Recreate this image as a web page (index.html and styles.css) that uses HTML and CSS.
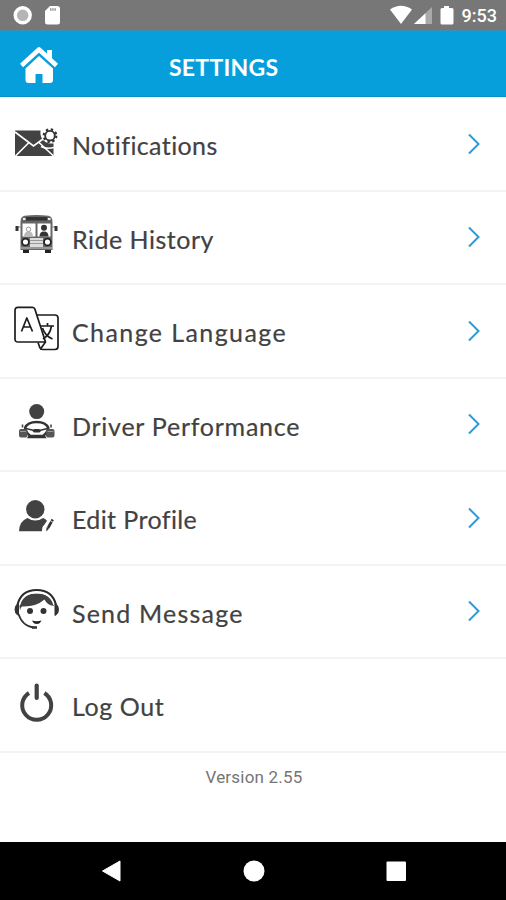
FILE: index.html
```html
<!DOCTYPE html>
<html lang="en">
<head>
    <meta charset="UTF-8">
    <meta name="viewport" content="width=device-width, initial-scale=1.0">
    <title>Settings</title>
    <link rel="stylesheet" href="styles.css">
</head>
<body>
    <div class="status-bar">
        <svg width="50" height="30" viewBox="0 0 50 30">
            <circle cx="10.700" cy="15.300" r="7.500" fill="#b5b5b5" stroke="#fff" stroke-width="3.400"/>
            <path d="M38 6h7q3 0 3 2.500v13.500q0 2.500-2.500 2.500h-10q-2.500 0-2.500-2.500V11z" fill="#fff"/>
            <path d="M38 9.500h6" stroke="#999" stroke-width="2.500" stroke-dasharray="1.500 .7"/>
        </svg>
        <div class="status-right">
            <svg width="66" height="30" viewBox="0 0 66 30">
                <path d="M1 9.500Q12 2 23 9.500L12 24z" fill="#fff"/>
                <path d="M43 7v17H25z" fill="#aaa"/>
                <path d="M36.500 13.200V24H25z" fill="#fff"/>
                <path d="M55 6h5v2h3q1.500 0 1.500 1.500V23q0 1.500-1.500 1.500h-10q-1.500 0-1.500-1.500V9.500Q51.500 8 53 8h2z" fill="#fff"/>
            </svg>
            <span class="clock">9:53</span>
        </div>
    </div>

    <header class="header">
        <svg class="home" width="40" height="38" viewBox="0 0 40 38">
            <path d="M1.500 19.500L19 3.500L36.500 19.500" fill="none" stroke="#fff" stroke-width="4.600" stroke-linejoin="round"/>
            <path d="M27 4h5v11l-5-4z" fill="#fff"/>
            <path d="M19 10L33 22.500V34q0 3-3 3h-7.500v-9h-7v9H8.500q-3 0-3-3V22.500z" fill="#fff"/>
        </svg>
        <h1>SETTINGS</h1>
    </header>

    <ul class="menu">
        <li class="item">
            <svg class="icon" viewBox="0 0 46 46">
                <path d="M1 9.500h25.500q-1 8 5 11.500q3 2 8 1.500V35H1z" fill="#424242"/>
                <path d="M1 11l18.500 14L29 18M1.500 35L15 21.500M39.500 35L25 21.500" fill="none" stroke="#fff" stroke-width="1.600"/>
                <path d="M27 25.500q6 3 13 1" fill="none" stroke="#fff" stroke-width="1.500"/>
                <circle cx="36" cy="14.700" r="6.300" fill="none" stroke="#333" stroke-width="2.200" stroke-dasharray="2.400 2.548"/>
                <circle cx="36" cy="14.700" r="4.800" fill="#fff" stroke="#333" stroke-width="1.900"/>
            </svg>
            <span class="label notifications">Notifications</span>
            <svg class="arrow" viewBox="0 0 14 22"><path d="M2 1.500L11.500 11L2 20.500"/></svg>
        </li>
        <li class="item">
            <svg class="icon" viewBox="0 0 46 46">
                <path d="M9 35h6v4H9zM31 35h6v4h-6z" fill="#222"/>
                <path d="M6.500 36V8q0-5.500 4-6.200q12-1.600 24 0q4 .7 4 6.200v28z" fill="#666"/>
                <path d="M12 4.800h21" stroke="#333" stroke-width="3.500"/>
                <path d="M9 5h2.500M34 5h2.500" stroke="#eee" stroke-width="2"/>
                <path d="M8.500 9.500h13v13h-13zM23.500 9.500h13v13h-13z" fill="#fff"/>
                <path d="M10 22.500q0-5 4.500-5t4.500 5z" fill="#bbb"/>
                <circle cx="14.500" cy="15.300" r="2.200" fill="none" stroke="#999"/>
                <path d="M25.500 22.500q0-5 4.500-5t4.500 5z" fill="#333"/>
                <circle cx="30" cy="13.800" r="3" fill="#333"/>
                <path d="M16 24h13v9H16z" fill="#ddd"/>
                <path d="M16 26.500h13M16 29.500h13" stroke="#999"/>
                <path d="M6.500 34h32" stroke="#aaa" stroke-width="1.500"/>
                <circle cx="11.500" cy="28" r="3.400" fill="#fff" stroke="#222" stroke-width="1.700"/>
                <circle cx="33.500" cy="28" r="3.400" fill="#fff" stroke="#222" stroke-width="1.700"/>
                <path d="M6.500 13H3M38.500 13H42" stroke="#777"/>
                <path d="M1.500 12h3v5h-3zM40.500 12h3v5h-3z" fill="#333"/>
            </svg>
            <span class="label ride">Ride History</span>
            <svg class="arrow" viewBox="0 0 14 22"><path d="M2 1.500L11.500 11L2 20.500"/></svg>
        </li>
        <li class="item">
            <svg class="icon" viewBox="0 0 46 46">
                <g fill="none" stroke="#1c1c1c" stroke-width="1.700" stroke-linejoin="round">
                    <path d="M22.500 7H41q3 0 3 3v28.500q0 3-3 3H28.500q-2 0-2.700-2L24 34.500"/>
                    <path d="M4 -.6h14.500q1.800 0 2.500 2L31.500 34H4q-3 0-3-3V2.400q0-3 3-3z"/>
                    <path d="M31.500 34l-5.200 7.200"/>
                    <path d="M7.500 23.500L12.800 10L18.500 23.500M9.300 19h7.500"/>
                    <path d="M26.500 18h13.500M33.500 15v3M28.500 20q2.500 8 10 11M37.500 18q-1.500 9-8.500 13"/>
                </g>
            </svg>
            <span class="label language">Change Language</span>
            <svg class="arrow" viewBox="0 0 14 22"><path d="M2 1.500L11.500 11L2 20.500"/></svg>
        </li>
        <li class="item">
            <svg class="icon" viewBox="0 0 46 46">
                <circle cx="22.700" cy="10.600" r="7.500" fill="#424242"/>
                <path d="M11 27q2.500-6 11.700-6t11.700 6q-1 5-6 8.500H17q-5-3.500-6-8.500z" fill="none" stroke="#333" stroke-width="2.400"/>
                <path d="M18 29.500l2.500-1.500h4.500l2.500 1.500-2 2h-5.500z" fill="#333"/>
                <path d="M12 27.500l8 2M33.500 27.500l-8 2" stroke="#333" stroke-width="1.300"/>
                <path d="M13 37.200q1-3.500 5-3.500h9.500q4 0 5 3.500z" fill="#333"/>
                <path d="M7 28h4.500q2 0 2 2v4.500q0 2-2 2H7q-2 0-2-2V30q0-2 2-2zM34 28h4.500q2 0 2 2v4.500q0 2-2 2H34q-2 0-2-2V30q0-2 2-2z" fill="#555"/>
                <path d="M8.500 23.500v3M37 23.500v3" stroke="#444" stroke-width="1.600"/>
                <path d="M6 30.500h6M33.500 30.500h6" stroke="#999"/>
            </svg>
            <span class="label driver">Driver Performance</span>
            <svg class="arrow" viewBox="0 0 14 22"><path d="M2 1.500L11.500 11L2 20.500"/></svg>
        </li>
        <li class="item">
            <svg class="icon" viewBox="0 0 46 46">
                <circle cx="21.300" cy="14.200" r="9.200" fill="#424242"/>
                <path d="M5 36.300q.5-10.500 8.500-13.300q7.800 5 15.600 0q2 .7 3.900 2.800l-3 4.500q-2 1-2 6z" fill="#424242"/>
                <path d="M38.700 24.500L34 33" stroke="#333" stroke-width="2.600"/>
                <path d="M32.500 32.300l2.500 1.400-2.700 2.800z" fill="#333"/>
                <path d="M36 25.500l3 1.800" stroke="#fff" stroke-width=".8"/>
            </svg>
            <span class="label profile">Edit Profile</span>
            <svg class="arrow" viewBox="0 0 14 22"><path d="M2 1.500L11.500 11L2 20.500"/></svg>
        </li>
        <li class="item">
            <svg class="icon" viewBox="0 0 46 46">
                <path d="M5.500 18Q8 5.500 22.700 5.500T40 18q-7-1-9.500-6.500Q22 19 8 18.500q-1.500 1-2 4z" fill="#424242"/>
                <path d="M3.500 17Q7 2 22.700 2T42 17" fill="none" stroke="#2c2c2c" stroke-width="2.200"/>
                <path d="M5.500 17Q9 4.600 22.700 4.600T40 17" fill="none" stroke="#fff" stroke-width="1.300"/>
                <path d="M4.500 15.500v12Q1 26 1 21.500t3.500-6zM41 15.500v12q3.500-1.500 3.500-6t-3.500-6z" fill="#333" stroke="#333"/>
                <path d="M4.500 26Q8.500 38.500 20 39.500" fill="none" stroke="#333" stroke-width="1.700"/>
                <path d="M18 39.500h5" stroke="#333" stroke-width="2.500"/>
                <circle cx="16" cy="23" r="3" fill="#333"/>
                <circle cx="29.500" cy="23" r="3" fill="#333"/>
                <path d="M18 32.500q4.700 1.500 9.500 0q-1.500 3.500-4.700 3.500T18 32.500z" fill="#222"/>
            </svg>
            <span class="label message">Send Message</span>
            <svg class="arrow" viewBox="0 0 14 22"><path d="M2 1.500L11.500 11L2 20.500"/></svg>
        </li>
        <li class="item">
            <svg class="icon" viewBox="0 0 46 46">
                <path d="M15 11A14.500 14.500 0 1 0 30.400 11" fill="none" stroke="#424242" stroke-width="4"/>
                <path d="M22.700 3.500v12.500" stroke="#424242" stroke-width="4.200" stroke-linecap="round"/>
            </svg>
            <span class="label logout">Log Out</span>
        </li>
    </ul>

    <p class="version">Version 2.55</p>

    <nav class="nav-bar">
        <svg width="24" height="24" viewBox="0 0 24 24"><path d="M21 2v20L3.500 12z" fill="#fff" stroke="#fff" stroke-linejoin="round"/></svg>
        <svg width="24" height="24" viewBox="0 0 24 24"><circle cx="12" cy="12" r="10.500" fill="#fff"/></svg>
        <svg width="24" height="24" viewBox="0 0 24 24"><rect x="2.500" y="2.500" width="19.500" height="19.500" rx="1" fill="#fff"/></svg>
    </nav>
</body>
</html>
```
FILE: styles.css
```css
* {
    box-sizing: border-box;
}
body {
    margin: 0;
    height: 900px;
    display: flex;
    flex-direction: column;
    background-color: #fff;
    font-family: Lato, sans-serif;
    color: #424242;
    overflow: hidden;
}
.status-bar {
    display: flex;
    justify-content: space-between;
    height: 30px;
    padding: 0 9px 0 12px;
    background-color: #777;
}
.status-right {
    display: flex;
    gap: 7px;
}
.clock {
    font-family: Roboto, sans-serif;
    font-size: 18px;
    font-weight: 500;
    line-height: 32px;
    color: #fff;
}
.header {
    display: flex;
    align-items: center;
    height: 67px;
    padding: 2px 0 0 20px;
    background-color: #069edb;
    border-top: 1px solid #3f8fb2;
    border-bottom: 1px solid #0590ca;
}
.home {
    margin-right: 109px;
}
h1 {
    margin: 5px 0 0;
    font-size: 23px;
    font-weight: 700;
    letter-spacing: 0.25px;
    line-height: 28px;
    color: #fff;
}
.menu {
    margin: 0;
    padding: 1px 0 0;
    list-style: none;
}
.item {
    display: flex;
    align-items: center;
    height: 93.5px;
    padding: 0 25px 0 14px;
    border-bottom: 2px solid #f3f3f3;
}
.icon {
    width: 46px;
    height: 46px;
    margin-right: 12px;
    overflow: visible;
}
.label {
    font-size: 25px;
    line-height: 30px;
    padding-top: 3px;
    white-space: nowrap;
    font-variant-ligatures: none;
    -webkit-text-stroke: 0.2px #424242;
}
.notifications {
    letter-spacing: 0.4px;
}
.ride {
    letter-spacing: 0.5px;
}
.language {
    letter-spacing: 1.4px;
}
.driver {
    letter-spacing: 0.75px;
}
.profile {
    letter-spacing: 0.4px;
}
.message {
    letter-spacing: 1.2px;
}
.logout {
    letter-spacing: 0.6px;
}
.arrow {
    width: 14px;
    height: 22px;
    margin-left: auto;
    fill: none;
    stroke: #2d9bd6;
    stroke-width: 2;
}
.version {
    margin: 12px 0 0;
    padding-left: 2px;
    font-family: Roboto, sans-serif;
    font-size: 17px;
    letter-spacing: 0.2px;
    line-height: 24px;
    text-align: center;
    color: #757575;
}
.nav-bar {
    display: flex;
    justify-content: space-between;
    align-items: center;
    height: 58px;
    margin-top: auto;
    padding: 0 98px 0 99px;
    background-color: #000;
}
```
